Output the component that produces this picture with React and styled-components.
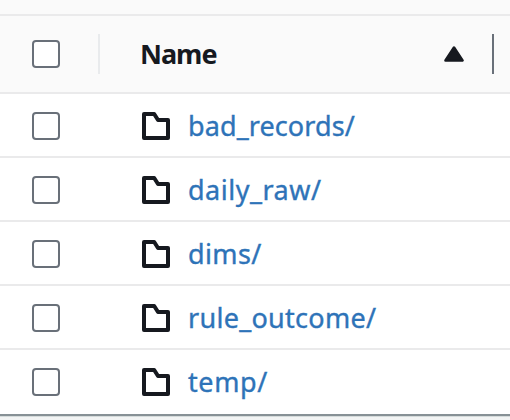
import React from "react";
import styled, { createGlobalStyle } from "styled-components";

const GlobalStyle = createGlobalStyle`
  body {
    margin: 0;
    background: #fff;
    font-family: "Noto Sans", "Open Sans", sans-serif;
    overflow: hidden;
  }
`;

const Table = styled.div`
  display: flex;
  flex-direction: column;
  width: 510px;
  height: 420px;
  overflow: hidden;
  background: #f2f4f4;
`;

const TopStrip = styled.div`
  box-sizing: border-box;
  height: 16px;
  flex: none;
  background: #fafafa;
  border-bottom: 2px solid #eaeaeb;
`;

const HeaderRow = styled.div`
  box-sizing: border-box;
  display: flex;
  align-items: center;
  height: 78px;
  flex: none;
  padding: 0 16px 0 32px;
  background: #fafafa;
  border-bottom: 2px solid #eaeaeb;
`;

const Row = styled.div`
  box-sizing: border-box;
  display: flex;
  align-items: center;
  height: 64px;
  flex: none;
  padding: 2px 16px 0 32px;
  background: #fff;
  border-bottom: 2px solid #eaeaeb;

  &:last-of-type {
    border-bottom-color: #fff;
  }
`;

const Checkbox = styled.button.attrs({ type: "button", role: "checkbox", "aria-checked": false })`
  box-sizing: border-box;
  width: 28px;
  height: 28px;
  flex: none;
  padding: 0;
  background: #fff;
  border: 2px solid #697079;
  border-radius: 4px;
`;

const Divider = styled.span`
  width: 2px;
  height: 40px;
  flex: none;
  margin-left: ${(p) => p.$gap}px;
  background: ${(p) => (p.$strong ? "#697079" : "#e9ebed")};
`;

const HeaderLabel = styled.span`
  flex: 1;
  margin-left: 40px;
  color: #16191f;
  font-size: 27px;
  font-weight: 700;
  line-height: 40px;
  letter-spacing: ${(p) => p.$tracking}px;
`;

const SortIcon = styled.svg`
  width: 20px;
  height: 16px;
  flex: none;
`;

const Folder = styled.svg`
  width: 28px;
  height: 28px;
  flex: none;
  margin-left: 82px;
`;

const Link = styled.a`
  margin-left: 18px;
  color: #2e73b8;
  font-size: 27px;
  line-height: 40px;
  letter-spacing: ${(p) => p.$tracking}px;
  white-space: nowrap;
  -webkit-text-stroke: 0.35px currentColor;
`;

const BottomEdge = styled.div`
  box-sizing: border-box;
  height: 3px;
  flex: none;
  background: #879196;
  border-bottom: 1px solid #d5dbdb;
`;

const TableBody = styled.div`
  height: 320px;
  flex: none;
`;

const folders = [
  { name: "bad_records/", tracking: 0.1 },
  { name: "daily_raw/", tracking: 0.5 },
  { name: "dims/", tracking: 0.4 },
  { name: "rule_outcome/", tracking: 0.28 },
  { name: "temp/", tracking: 0.6 },
];

function FolderIcon() {
  return (
    <Folder viewBox="0 0 28 28" fill="none" stroke="#16191f" strokeWidth="4" strokeLinejoin="round">
      <path d="M2 2H12.2L16 8H26V26H2Z" />
    </Folder>
  );
}

export default function App() {
  return (
    <>
      <GlobalStyle />
      <Table>
        <TopStrip />
        <HeaderRow>
          <Checkbox />
          <Divider $gap={38} />
          <HeaderLabel $tracking={-1}>Name</HeaderLabel>
          <SortIcon viewBox="0 0 20 16">
            <path d="M10 1.5L18.5 14.5H1.5Z" fill="#16191f" stroke="#16191f" strokeWidth="2.6" strokeLinejoin="round" />
          </SortIcon>
          <Divider $gap={28} $strong />
        </HeaderRow>
        <TableBody>
          {folders.map((f) => (
            <Row key={f.name}>
              <Checkbox />
              <FolderIcon />
              <Link $tracking={f.tracking}>{f.name}</Link>
            </Row>
          ))}
        </TableBody>
        <BottomEdge />
      </Table>
    </>
  );
}
